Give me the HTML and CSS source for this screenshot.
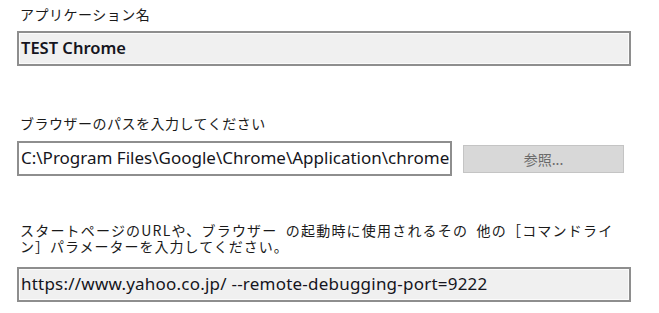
FILE: index.html
```html
<!DOCTYPE html>
<html lang="ja">
<head>
<meta charset="utf-8">
<link rel="stylesheet" href="styles.css">
</head>
<body>
<div class="form">
  <div class="label label-first">アプリケーション名</div>
  <div class="field readonly bold">TEST Chrome</div>

  <div class="label label-second">ブラウザーのパスを入力してください</div>
  <div class="row">
    <div class="field editable path">C:\Program Files\Google\Chrome\Application\chrome</div>
    <div class="button">参照...</div>
  </div>

  <div class="label label-third"><span class="line-one">スタートページのURLや、ブラウザー の起動時に使用されるその 他の［コマンドライ</span><br>ン］パラメーターを入力してください。</div>
  <div class="field readonly url">https://www.yahoo.co.jp/ --remote-debugging-port=9222</div>
</div>
</body>
</html>
```

FILE: styles.css
```css
html, body {
  margin: 0;
  padding: 0;
  background: #ffffff;
}

.form {
  display: flex;
  flex-direction: column;
  align-items: flex-start;
  padding: 7px 0 0 17px;
  width: 614px;
}

.label {
  font-family: "Noto Sans CJK JP", sans-serif;
  font-size: 14px;
  letter-spacing: 0.5px;
  line-height: 15px;
  color: #1a1a1a;
  padding-left: 3px;
  white-space: nowrap;
}

.label-first { margin-bottom: 9px; }
.label-second { margin-top: 50px; margin-bottom: 10px; }
.label-third {
  margin-top: 46px;
  margin-bottom: 13px;
  line-height: 16px;
  letter-spacing: 1px;
}
.line-one {
  letter-spacing: 1.2px;
  word-spacing: 4px;
}

.field {
  box-sizing: border-box;
  height: 35px;
  width: 614px;
  border: 2px solid #8e8e8e;
  box-shadow: inset 0 0 0 1px #fbfbfb;
  font-family: "Noto Sans", "Open Sans", sans-serif;
  font-size: 17px;
  line-height: 30px;
  padding-left: 2px;
  color: #151520;
  white-space: nowrap;
  overflow: hidden;
}

.readonly { background: #f0f0f0; }
.editable { background: #ffffff; box-shadow: none; }
.bold { font-weight: 600; font-size: 16.5px; }
.url { letter-spacing: 0.22px; }

.row {
  display: flex;
  align-items: center;
  gap: 11px;
}

.path { width: 435px; }

.button {
  box-sizing: border-box;
  width: 161px;
  height: 28px;
  background: #d8d8d8;
  border: 1px solid #c4c4c4;
  font-family: "Noto Sans CJK JP", sans-serif;
  font-size: 14px;
  line-height: 26px;
  color: #6a6a6a;
  text-align: center;
}
```
